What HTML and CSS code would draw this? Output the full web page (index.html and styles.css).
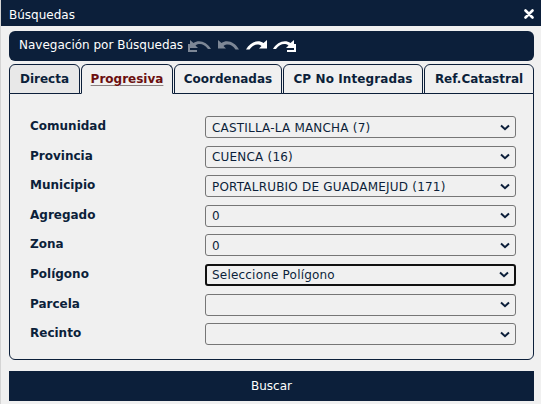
FILE: index.html
```html
<!DOCTYPE html>
<html lang="es">
<head>
  <meta charset="UTF-8" />
  <title>Búsquedas</title>
  <link rel="stylesheet" href="styles.css">
</head>
<body>
  <div class="dialog">
    <header class="title-bar">
      <span class="title-text">Búsquedas</span>
      <svg class="close" width="10" height="10" viewBox="0 0 10 10"><path d="M1.500 1.500 8.500 8.500M8.500 1.500 1.500 8.500" stroke="#fff" stroke-width="2.600" stroke-linecap="round"/></svg>
    </header>

    <div class="content">
      <div class="toolbar">
        <span class="toolbar-title">Navegación por Búsquedas</span>
        <svg class="nav-icon" width="28" height="14" viewBox="0 0 28 14" fill="#7d8796">
          <path d="M2 1V9H10L7.500 6.500C11 4 16 4.500 20 10H23C19 3 11 0 5.500 4Z"/>
          <path d="M0 5H2V11H9V13H0Z"/>
        </svg>
        <svg class="nav-icon" width="28" height="14" viewBox="0 0 28 14" fill="#7d8796">
          <path d="M2 1V9.500H10L7.500 7C11 4.500 16 5 19.500 10.500H23C19 3 11 0 5.500 4Z"/>
        </svg>
        <svg class="nav-icon" width="28" height="14" viewBox="0 0 28 14" fill="#fff">
          <path d="M23 1V9.500H15L17.500 7C14 4.500 9 5 5.500 10.500H2C6 3 14 0 19.500 4Z"/>
        </svg>
        <svg class="nav-icon" width="28" height="14" viewBox="0 0 28 14" fill="#fff">
          <path d="M22 1V9H14L16.500 6.500C13 4 8 4.500 4 10H1C5 3 13 0 18.500 4Z"/>
          <path d="M24 5H22V11H15V13H24Z"/>
        </svg>
      </div>

      <nav class="tabs">
        <a class="tab tab-directa">Directa</a>
        <a class="tab tab-progresiva active">Progresiva</a>
        <a class="tab tab-coordenadas">Coordenadas</a>
        <a class="tab tab-cp">CP No Integradas</a>
        <a class="tab tab-ref">Ref.Catastral</a>
      </nav>

      <form class="panel">
        <label>Comunidad</label>
        <select><option>CASTILLA-LA MANCHA (7)</option></select>
        <label>Provincia</label>
        <select><option>CUENCA (16)</option></select>
        <label>Municipio</label>
        <select><option>PORTALRUBIO DE GUADAMEJUD (171)</option></select>
        <label>Agregado</label>
        <select><option>0</option></select>
        <label>Zona</label>
        <select><option>0</option></select>
        <label>Polígono</label>
        <select class="focused"><option>Seleccione Polígono</option></select>
        <label>Parcela</label>
        <select><option></option></select>
        <label>Recinto</label>
        <select><option></option></select>
      </form>

      <button class="search" type="button">Buscar</button>
    </div>
  </div>
</body>
</html>
```

FILE: styles.css
```css
body {
  margin: 0;
  background: #f0f0f0;
  font-family: "DejaVu Sans", Verdana, sans-serif;
  font-size: 12px;
  color: #0c1f3a;
}

.dialog {
  height: 404px;
  overflow: hidden;
  border-left: 1px solid #d4d4d4;
}

.title-bar {
  display: flex;
  align-items: center;
  justify-content: space-between;
  height: 26px;
  padding: 0 7px 0 8px;
  background: #0c1f3a;
  color: #fff;
}

.title-text {
  margin-top: 3px;
}

.close {
  margin-top: 1px;
}

.content {
  padding: 5px 7px 0 8px;
}

.toolbar {
  display: flex;
  align-items: center;
  height: 30px;
  padding-left: 10px;
  background: #0c1f3a;
  border-radius: 6px;
  color: #fff;
}

.toolbar-title {
  margin-top: -3px;
  margin-right: 5px;
}

.nav-icon {
  margin-top: -1px;
}

.tabs {
  display: flex;
  gap: 1px;
  height: 30px;
  margin-top: 3px;
}

.tab {
  display: flex;
  align-items: center;
  justify-content: center;
  box-sizing: border-box;
  border: 1px solid #0c1f3a;
  border-radius: 6px 6px 0 0;
  background: #f0f0f0;
  font-weight: bold;
  font-size: 12px;
}

.tab-directa {
  width: 71px;
  background: #e8e8e8;
}

.tab-progresiva { width: 92px; }
.tab-coordenadas { width: 108px; }
.tab-cp { width: 140px; letter-spacing: 0.1px; }
.tab-ref { width: 110px; }

.tab.active {
  border-bottom-color: #f0f0f0;
  color: #6b0f0f;
  text-decoration: underline;
  text-decoration-color: #8a8080;
  text-underline-offset: 2px;
}

.panel {
  display: grid;
  grid-template-columns: 175px 311px;
  align-items: center;
  align-content: start;
  row-gap: 7.600px;
  box-sizing: border-box;
  height: 267px;
  margin-top: -1px;
  padding: 22px 0 0 20px;
  border: 1px solid #0c1f3a;
  border-radius: 0 0 6px 6px;
}

.panel label {
  font-weight: bold;
  margin-top: -2px;
}

.panel select {
  appearance: none;
  height: 22px;
  box-sizing: border-box;
  padding: 1px 0 0 6px;
  border: 1px solid #767676;
  border-radius: 3px;
  background: #f0f0f0 url("data:image/svg+xml,%3Csvg xmlns='http://www.w3.org/2000/svg' width='10' height='7'%3E%3Cpath d='M1 1.500 5 5.200 9 1.500' fill='none' stroke='%230c1f3a' stroke-width='2'/%3E%3C/svg%3E") no-repeat right 5px center;
  font: 12px "DejaVu Sans", Verdana, sans-serif;
  letter-spacing: 0.2px;
  color: #0c1f3a;
}

.panel select.focused {
  border: 2px solid #101010;
  padding-left: 5px;
}

.search {
  display: block;
  width: 525px;
  height: 30px;
  margin-top: 11px;
  border: none;
  background: #0c1f3a;
  color: #fff;
  font: 12px "DejaVu Sans", Verdana, sans-serif;
}
```
